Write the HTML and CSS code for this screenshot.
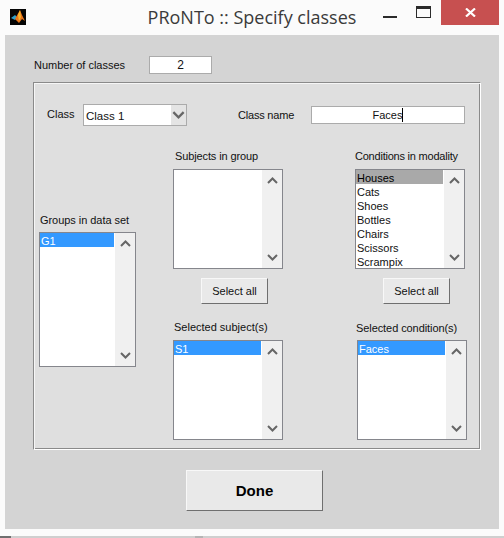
FILE: index.html
```html
<!DOCTYPE html>
<html lang="en">
<head>
<meta charset="utf-8">
<title>PRoNTo :: Specify classes</title>
<link rel="stylesheet" href="styles.css">
</head>
<body>
<svg class="defs" width="0" height="0" aria-hidden="true">
  <symbol id="up" viewBox="0 0 11 7"><path d="M1 6 L5.5 1.5 L10 6" fill="none" stroke="#666" stroke-width="2"/></symbol>
  <symbol id="down" viewBox="0 0 11 7"><path d="M1 1 L5.5 5.5 L10 1" fill="none" stroke="#666" stroke-width="2"/></symbol>
</svg>
<div class="window">
  <header class="titlebar">
    <svg class="logo" width="16" height="16" viewBox="0 0 16 16" aria-hidden="true">
      <rect width="16" height="16" fill="#050505"/>
      <path d="M1 9 L5 6 L7 8 L5 11 Z" fill="#2f9fc9"/>
      <path d="M5 10 L10 1 L12 6 L15 12 L12 10 L9 14 Z" fill="#e8751a"/>
      <path d="M8 6 L10 1 L11 8 L9 12 Z" fill="#f7b52c"/>
    </svg>
    <div class="title">PRoNTo :: Specify classes</div>
    <div class="controls">
      <div class="min"></div>
      <div class="max"></div>
      <div class="close">
        <svg width="11" height="9" viewBox="0 0 11 9" aria-hidden="true"><path d="M1 0.5 L10 8.5 M10 0.5 L1 8.5" stroke="#fff" stroke-width="2.2"/></svg>
      </div>
    </div>
  </header>
  <main class="client">
    <div class="count-row">
      <span class="label">Number of classes</span>
      <div class="field count-field">2</div>
    </div>
    <section class="panel">
      <div class="class-row">
        <span class="label class-label">Class</span>
        <div class="select">
          <span class="select-text">Class 1</span>
          <span class="select-arrow"><svg width="13" height="8"><use href="#down"/></svg></span>
        </div>
        <span class="label name-label">Class name</span>
        <div class="field name-field">Faces<span class="caret"></span></div>
      </div>
      <div class="columns">
        <div class="col col-groups">
          <span class="label cap-groups">Groups in data set</span>
          <div class="list list-tall">
            <div class="items"><div class="item selected">G1</div></div>
            <div class="scroll"><svg width="11" height="7"><use href="#up"/></svg><svg width="11" height="7"><use href="#down"/></svg></div>
          </div>
        </div>
        <div class="col col-subjects">
          <span class="label cap">Subjects in group</span>
          <div class="list">
            <div class="items"></div>
            <div class="scroll"><svg width="11" height="7"><use href="#up"/></svg><svg width="11" height="7"><use href="#down"/></svg></div>
          </div>
          <button class="btn">Select all</button>
          <span class="label cap-lower">Selected subject(s)</span>
          <div class="list">
            <div class="items"><div class="item selected">S1</div></div>
            <div class="scroll"><svg width="11" height="7"><use href="#up"/></svg><svg width="11" height="7"><use href="#down"/></svg></div>
          </div>
        </div>
        <div class="col col-conditions">
          <span class="label cap">Conditions in modality</span>
          <div class="list">
            <div class="items">
              <div class="item current">Houses</div>
              <div class="item">Cats</div>
              <div class="item">Shoes</div>
              <div class="item">Bottles</div>
              <div class="item">Chairs</div>
              <div class="item">Scissors</div>
              <div class="item">Scrampix</div>
            </div>
            <div class="scroll"><svg width="11" height="7"><use href="#up"/></svg><svg width="11" height="7"><use href="#down"/></svg></div>
          </div>
          <button class="btn">Select all</button>
          <span class="label cap-lower">Selected condition(s)</span>
          <div class="list list-shift">
            <div class="items"><div class="item selected">Faces</div></div>
            <div class="scroll"><svg width="11" height="7"><use href="#up"/></svg><svg width="11" height="7"><use href="#down"/></svg></div>
          </div>
        </div>
      </div>
    </section>
    <button class="done">Done</button>
  </main>
  <footer class="bottom-edge"></footer>
</div>
</body>
</html>
```
FILE: styles.css
```css
* { box-sizing: border-box; }
html, body { margin: 0; padding: 0; }
body {
  width: 504px;
  height: 538px;
  overflow: hidden;
  background: #fbfbfb;
  font-family: "Liberation Sans", Arial, sans-serif;
  font-size: 11px;
  color: #111;
}
.defs { display: block; height: 0; }
.window { width: 504px; height: 538px; display: flex; flex-direction: column; }

.titlebar {
  height: 35px;
  flex: none;
  display: grid;
  grid-template-columns: 1fr auto 1fr;
}
.logo { margin: 9px 0 0 10px; }
.title {
  font-family: "Open Sans", "Noto Sans", sans-serif;
  font-size: 18px;
  line-height: 34px;
  color: #3a3a3a;
}
.controls { display: flex; justify-content: flex-end; align-items: flex-start; margin-right: 5px; }
.min { width: 14px; height: 2px; background: #2b2b2b; margin-top: 16px; }
.max {
  width: 15px;
  height: 12px;
  margin: 6px 0 0 19px;
  border: 1px solid #2b2b2b;
  border-top-width: 3px;
}
.close {
  width: 58px;
  height: 25px;
  margin-left: 10px;
  background: #c75050;
  display: flex;
  align-items: center;
  justify-content: center;
}

.client {
  height: 494px;
  flex: none;
  margin: 0 5px;
  background: #d4d4d4;
  display: flex;
  flex-direction: column;
  align-items: flex-start;
}
.label { line-height: 14px; white-space: nowrap; }
.field {
  background: #fff;
  border: 1px solid #ababab;
  text-align: center;
  line-height: 16px;
  font-size: 11px;
}
.count-row { display: flex; align-items: center; margin: 21px 0 0 29px; height: 18px; }
.count-row .label { width: 115px; }
.count-field { width: 63px; height: 18px; font-size: 12px; }

.panel {
  width: 448px;
  height: 368px;
  margin: 8px 0 0 28px;
  background: #dfdfdf;
  border: 1px solid;
  border-color: #8a8a8a #fff #fff #8a8a8a;
  box-shadow: inset 1px 1px 0 #f6f6f6, inset -1px -1px 0 #8a8a8a;
}
.class-row { display: flex; align-items: center; height: 22px; margin: 21px 0 0 13px; }
.class-label { width: 36px; margin-top: -3px; }
.select {
  width: 104px;
  height: 22px;
  background: #fff;
  border: 1px solid #ababab;
  display: flex;
}
.select-text { flex: 1; padding-left: 2px; line-height: 22px; font-size: 11.5px; }
.select-arrow {
  width: 15px;
  background: #e4e4e4;
  display: flex;
  align-items: center;
  justify-content: center;
}
.name-label { width: 73px; margin-left: 51px; letter-spacing: -0.2px; }
.name-field { width: 154px; height: 18px; }
.caret {
  display: inline-block;
  width: 1px;
  height: 14px;
  background: #000;
  vertical-align: -3px;
}

.columns { display: flex; align-items: flex-start; }
.col { display: flex; flex-direction: column; align-items: flex-start; }
.col-groups { width: 97px; margin: 87px 0 0 5px; }
.col-subjects { width: 110px; margin: 23px 0 0 37px; }
.col-conditions { width: 112px; margin: 23px 0 0 72px; }
.cap-groups { margin-left: 1px; margin-bottom: 5px; letter-spacing: -0.05px; }
.cap { margin-bottom: 6px; letter-spacing: -0.12px; }
.col-conditions .cap { letter-spacing: -0.22px; }
.col-subjects .cap { margin-left: 2px; }
.cap-lower { margin: 16px 0 6px 1px; }
.col-conditions .cap-lower { margin: 17px 0 5px 1px; letter-spacing: -0.08px; }

.list {
  width: 110px;
  height: 100px;
  background: #fff;
  border: 1px solid #85868c;
  display: flex;
  flex: none;
}
.list-tall { width: 97px; height: 135px; }
.list-shift { margin-left: 2px; }
.items { flex: 1; min-width: 0; padding-right: 1px; overflow: hidden; }
.item { height: 14px; line-height: 16px; padding-left: 1px; }
.item.selected { background: #3399ff; color: #fff; }
.item.current { background: #a9a9a9; color: #000; }
.scroll {
  width: 20px;
  flex: none;
  background: #f0f0f0;
  display: flex;
  flex-direction: column;
  align-items: center;
  justify-content: space-between;
  padding: 7px 0 7px;
}
.scroll svg { display: block; }

.btn {
  width: 67px;
  height: 26px;
  margin: 9px 0 0 28px;
  padding: 0;
  background: #e9e9e9;
  border: 1px solid;
  border-color: #f8f8f8 #6f6f6f #6f6f6f #f8f8f8;
  font: 11px "Liberation Sans", Arial, sans-serif;
  color: #111;
}
.done {
  width: 137px;
  height: 41px;
  margin: 20px 0 0 181px;
  padding: 0;
  background: #e9e9e9;
  border: 1px solid;
  border-color: #f8f8f8 #6f6f6f #6f6f6f #f8f8f8;
  font: bold 15px "Liberation Sans", Arial, sans-serif;
  color: #000;
}
.bottom-edge {
  height: 2px;
  margin-top: 7px;
  background: linear-gradient(to right, #6f6f6f 0 11px, #cfcfcf 11px 195px, #b5b5b5 195px 203px, #cfcfcf 203px);
}
```
